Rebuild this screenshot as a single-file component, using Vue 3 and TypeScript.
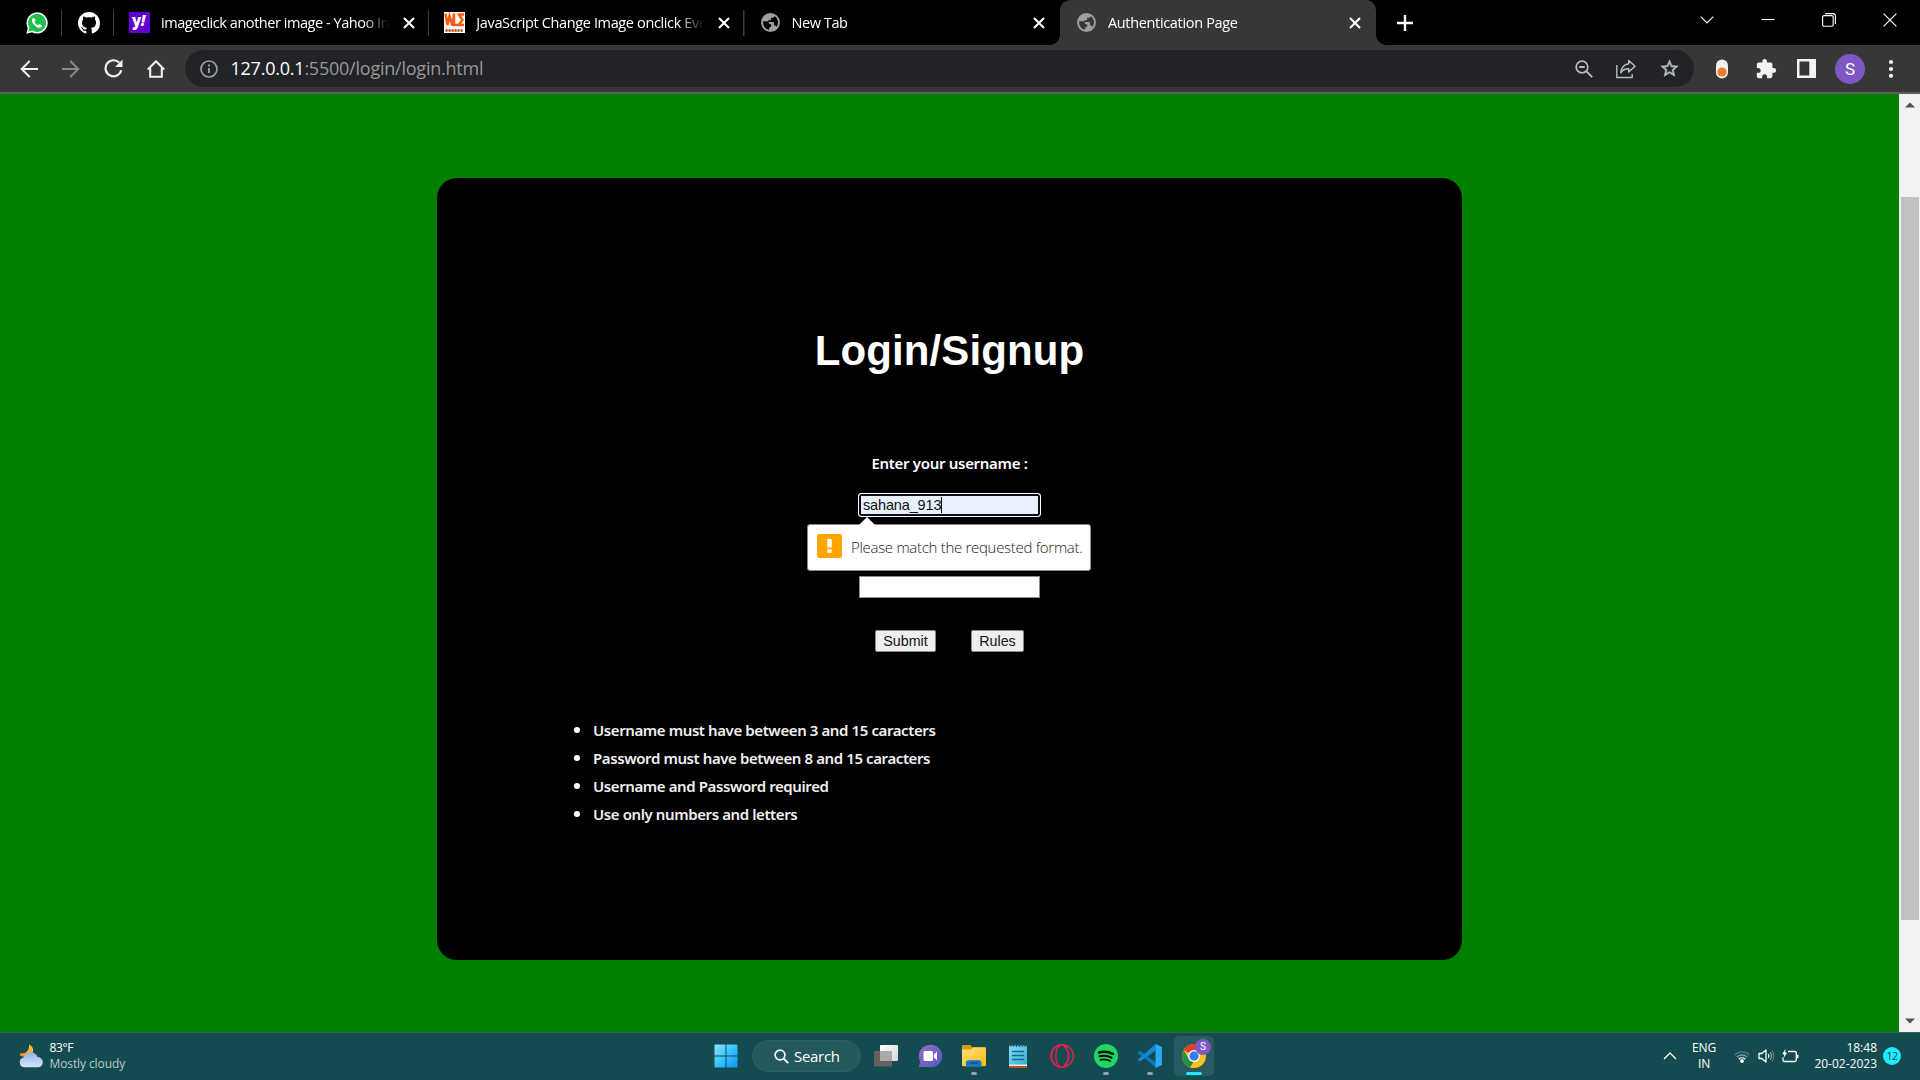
<script setup lang="ts">
import { ref } from 'vue'

interface Tab {
  title: string
  kind: 'yahoo' | 'wls' | 'globe'
  spacing: number
  active?: boolean
}

const tabs: Tab[] = [
  { title: 'imageclick another image - Yahoo Image Search', kind: 'yahoo', spacing: -0.45 },
  { title: 'JavaScript Change Image onclick Event', kind: 'wls', spacing: -0.37 },
  { title: 'New Tab', kind: 'globe', spacing: -0.45 },
  { title: 'Authentication Page', kind: 'globe', spacing: -0.33, active: true },
]

const rules: string[] = [
  'Username must have between 3 and 15 caracters',
  'Password must have between 8 and 15 caracters',
  'Username and Password required',
  'Use only numbers and letters',
]

const username = ref('sahana_913')
</script>

<template>
  <div class="screen">
    <header class="tabbar">
      <div class="pinned">
        <svg width="22" height="22" viewBox="0 0 22 22">
          <path d="M0.3 21.7 1.8 16A10.6 10.6 0 1 1 6 20.2Z" fill="#fff" />
          <path d="M2.3 19.7 3.4 15.6A9 9 0 1 1 6.4 18.6Z" fill="#1fbf4b" />
          <path d="M7.5 6c-.5 0-1.5.8-1.5 2.4 0 3 4.5 7.400 7.600 7.400 1.500 0 2.600-1 2.600-2.200 0-.5-2.600-1.800-3-1.600l-1.200 1.300c-1.500-.6-2.900-1.900-3.500-3.300l.9-1.200C9.500 8.200 8.500 6 8 6z" fill="#fff" />
        </svg>
      </div>
      <div class="pinned">
        <svg width="22" height="22" viewBox="0 0 16 16">
          <path fill="#fff" d="M8 0C3.580 0 0 3.580 0 8c0 3.540 2.290 6.530 5.470 7.590.4.070.55-.17.55-.38 0-.19-.01-.82-.01-1.490-2.010.37-2.530-.49-2.690-.94-.09-.23-.48-.94-.82-1.130-.28-.15-.68-.52-.01-.53.63-.01 1.080.58 1.230.82.72 1.210 1.870.87 2.330.66.070-.52.28-.87.51-1.070-1.780-.2-3.640-.89-3.640-3.950 0-.87.31-1.590.82-2.150-.08-.2-.36-1.020.08-2.120 0 0 .67-.21 2.200.82.64-.18 1.320-.27 2-.27s1.360.09 2 .27c1.530-1.040 2.200-.82 2.200-.82.44 1.100.16 1.920.08 2.120.51.56.82 1.270.82 2.150 0 3.070-1.870 3.750-3.650 3.950.29.25.54.73.54 1.480 0 1.070-.01 1.930-.01 2.200 0 .21.15.46.55.38A8.010 8.010 0 0 0 16 8c0-4.420-3.580-8-8-8z" />
        </svg>
      </div>
      <div v-for="(tab, i) in tabs" :key="i" class="tab" :class="{ active: tab.active }">
        <span v-if="tab.kind === 'yahoo'" class="fav yahoo">y<i>!</i></span>
        <svg v-else-if="tab.kind === 'wls'" class="fav" width="21" height="21" viewBox="0 0 21 21">
          <rect width="21" height="21" fill="#fff" />
          <path d="M1.500 1.500 3.500 13 5.500 4l3 9.500L10 1.500v11.500h4M20 2.500h-5l3.500 5.500-4 5H20" fill="none" stroke="#fb5a0b" stroke-width="2.500" />
          <path d="M1.500 18.500h18" stroke="#b8420e" stroke-width="2.600" stroke-dasharray="2.200 .8" />
        </svg>
        <svg v-else class="fav" width="21" height="21" viewBox="0 0 24 24">
          <path fill="#9aa0a6" d="M12 1.200a10.800 10.800 0 1 0 0 21.600 10.800 10.800 0 0 0 0-21.600zm-1.500 19.200A8.600 8.600 0 0 1 3.600 12c0-.5.1-1 .2-1.500h4.500c1 0 1.700.6 1.700 1.600v.6c0 .7.500 1.200 1.200 1.200h1.600v2.200c0 .8-.6 1.300-1.300 1.300h-1zM18.700 17c-.3-.9-1-1.500-2-1.500h-.6v-3c0-.6-.4-1-1-1H9.600V9.300h2.100c.6 0 1-.4 1-1V6.500h2c1.200 0 2-.9 2-2A8.600 8.600 0 0 1 18.700 17z" />
        </svg>
        <span class="tab-title" :style="{ letterSpacing: tab.spacing + 'px' }">{{ tab.title }}</span>
        <svg class="tab-close" width="12" height="12" viewBox="0 0 12 12">
          <path d="M1 1l10 10M11 1 1 11" stroke="#fff" stroke-width="2.100" />
        </svg>
      </div>
      <svg class="plus" width="16" height="16" viewBox="0 0 16 16">
        <path d="M8 0v16M0 8h16" stroke="#fff" stroke-width="2.400" />
      </svg>
      <div class="window-buttons">
        <svg width="14" height="14" viewBox="0 0 14 14"><path d="M.7 3.700 7 10l6.300-6.300" fill="none" stroke="#fff" stroke-width="1.100" /></svg>
        <svg width="14" height="14" viewBox="0 0 14 14"><path d="M.5 6.500h13" stroke="#fff" stroke-width="1.100" /></svg>
        <svg width="14" height="14" viewBox="0 0 14 14">
          <rect x=".6" y="2.600" width="10.600" height="10.600" rx="1.500" fill="none" stroke="#fff" stroke-width="1.100" />
          <path d="M3 .6h8c1.400 0 2.400 1 2.400 2.400v8" fill="none" stroke="#fff" stroke-width="1.100" />
        </svg>
        <svg width="14" height="14" viewBox="0 0 14 14"><path d="M.6.6l12.800 12.800M13.400.6.6 13.400" stroke="#fff" stroke-width="1.100" /></svg>
      </div>
    </header>

    <nav class="toolbar">
      <div class="nav-buttons">
        <svg width="18" height="18" viewBox="0 0 18 18"><path d="M18 9H2M9.700 1 1.700 9l8 8" fill="none" stroke="#f1f3f4" stroke-width="2" /></svg>
        <svg width="18" height="18" viewBox="0 0 18 18"><path d="M0 9h16M8.300 1l8 8-8 8" fill="none" stroke="#86888a" stroke-width="2" /></svg>
        <svg width="19" height="19" viewBox="0 0 19 19">
          <path d="M17.300 11.300A8 8 0 1 1 15.200 3.600" fill="none" stroke="#f1f3f4" stroke-width="2.100" />
          <path d="M18.500.6v7.400H11z" fill="#f1f3f4" />
        </svg>
        <svg width="18" height="18" viewBox="0 0 18 18"><path d="M.8 9.500 9 1.300l8.200 8.200M3.200 8v8.800h11.600V8" fill="none" stroke="#f1f3f4" stroke-width="2.100" /></svg>
      </div>
      <div class="omnibox">
        <svg class="info" width="18" height="18" viewBox="0 0 18 18">
          <circle cx="9" cy="9" r="8" fill="none" stroke="#9aa0a6" stroke-width="1.700" />
          <path d="M9 8v5M9 4.500v2" stroke="#9aa0a6" stroke-width="1.900" />
        </svg>
        <span class="url"><b>127.0.0.1</b>:5500/login/login.html</span>
        <div class="omni-icons">
          <svg width="18" height="18" viewBox="0 0 18 18">
            <circle cx="7" cy="7" r="5.800" fill="none" stroke="#b9bcbf" stroke-width="1.700" />
            <path d="M4.200 7h5.600M11.200 11.200l6 6" stroke="#b9bcbf" stroke-width="1.900" />
          </svg>
          <svg width="20" height="20" viewBox="0 0 20 20">
            <path d="M.8 6v12.500h15.400V15" fill="none" stroke="#b9bcbf" stroke-width="1.400" />
            <path d="M12.700 1.500 19 7.200l-6.300 5.700V9.800C9 9.800 6.500 11 4.800 13.800 5.300 9 7.500 5.500 12.700 4.800z" fill="none" stroke="#b9bcbf" stroke-width="1.500" stroke-linejoin="round" />
          </svg>
          <svg width="21" height="21" viewBox="0 0 24 24">
            <path fill="#b9bcbf" d="M22 9.240l-7.190-.62L12 2 9.190 8.630 2 9.240l5.460 4.730L5.820 21 12 17.270 18.180 21l-1.630-7.030L22 9.240zM12 15.400l-3.760 2.270 1-4.280-3.320-2.880 4.380-.38L12 6.100l1.710 4.040 4.380.38-3.320 2.880 1 4.280L12 15.400z" stroke="#b9bcbf" stroke-width=".6" />
          </svg>
        </div>
      </div>
      <div class="tool-icons">
        <svg width="14" height="20" viewBox="0 0 14 20"><rect x="1" y=".5" width="12" height="19" rx="6" fill="#eef0f1" /><circle cx="7" cy="13" r="4.600" fill="#f0792b" /></svg>
        <svg class="puzzle" width="22" height="22" viewBox="0 0 24 24"><path fill="#f1f3f4" d="M20.500 11H19V7c0-1.100-.9-2-2-2h-4V3.500a2.500 2.500 0 0 0-5 0V5H4c-1.100 0-1.990.9-1.990 2v3.800H3.500c1.490 0 2.700 1.210 2.700 2.700s-1.210 2.700-2.700 2.700H2V20c0 1.100.9 2 2 2h3.800v-1.500c0-1.490 1.210-2.700 2.700-2.700 1.490 0 2.700 1.210 2.700 2.700V22H17c1.100 0 2-.9 2-2v-4h1.500a2.500 2.500 0 0 0 0-5z" /></svg>
        <svg class="panel" width="19" height="19" viewBox="0 0 19 19"><path fill="#f1f3f4" fill-rule="evenodd" d="M0 0h19v19H0zM2.500 2.500v14h9.800v-14z" /></svg>
        <span class="avatar">S</span>
        <svg class="menu" width="6" height="20" viewBox="0 0 6 20"><g fill="#f1f3f4"><circle cx="3" cy="3" r="2.100" /><circle cx="3" cy="10" r="2.100" /><circle cx="3" cy="16.800" r="2.100" /></g></svg>
      </div>
    </nav>

    <main class="viewport">
      <section class="page">
        <div class="card">
          <h1>Login/Signup</h1>
          <label>Enter your username :</label>
          <div class="field focused">
            <span class="value">{{ username }}</span><span class="caret"></span>
            <div class="bubble">
              <svg class="arrow" width="16" height="8" viewBox="0 0 16 8"><path d="M0 8 8 0l8 8z" fill="#fff" /></svg>
              <span class="warn">
                <svg width="5" height="14" viewBox="0 0 5 14"><path d="M.3 0h4.400v8.500H.3zM.3 10.200h4.400v3.500H.3z" fill="#fff" /></svg>
              </span>
              <span class="message">Please match the requested format.</span>
            </div>
          </div>
          <div class="field plain"></div>
          <div class="buttons">
            <button class="submit">Submit</button>
            <button class="rules-btn">Rules</button>
          </div>
          <ul>
            <li v-for="rule in rules" :key="rule">{{ rule }}</li>
          </ul>
        </div>
      </section>
      <aside class="scrollbar">
        <svg width="10" height="6" viewBox="0 0 10 6"><path d="M0 5.500 5 .5l5 5z" fill="#505050" /></svg>
        <div class="thumb"></div>
        <svg width="10" height="6" viewBox="0 0 10 6"><path d="M0 .5h10l-5 5z" fill="#505050" /></svg>
      </aside>
    </main>

    <footer class="taskbar">
      <div class="weather">
        <svg width="24" height="24" viewBox="0 0 24 24">
          <defs>
            <linearGradient id="moon" x1="0" y1="1" x2="1" y2="0"><stop offset="0" stop-color="#f08a1c" /><stop offset="1" stop-color="#f9c846" /></linearGradient>
            <linearGradient id="cloud" x1="0" y1="0" x2="0" y2="1"><stop offset="0" stop-color="#8fb2ea" /><stop offset="1" stop-color="#d9e6fb" /></linearGradient>
          </defs>
          <path d="M10 .5c4 1.500 5.500 6 3 9.500-2 3-6 4-11 2C0 11 1 9 2.500 9.300 7.500 10 10.500 5 10 .5z" fill="url(#moon)" />
          <path d="M5 23.300a5 5 0 0 1-.5-9.800C6 9.800 9 8.500 12 8.500c3.500 0 5.800 2 6.500 4.600a5.100 5.100 0 0 1 .5 10.200z" fill="url(#cloud)" />
        </svg>
        <div class="weather-text"><span class="temp">83°F</span><span class="cond">Mostly cloudy</span></div>
      </div>

      <div class="apps">
        <div class="app">
          <svg width="24" height="24" viewBox="0 0 24 24">
            <defs><linearGradient id="win" x1="0" y1="0" x2="1" y2="1"><stop offset="0" stop-color="#8be2ff" /><stop offset=".5" stop-color="#35c3fb" /><stop offset="1" stop-color="#0a95f2" /></linearGradient></defs>
            <path fill="url(#win)" d="M.5 1.500q0-1 1-1h10v11H.500zM12.500.5h10q1 0 1 1v10h-11zM.5 12.500h11v11h-10q-1 0-1-1zM12.500 12.500h11v10q0 1-1 1h-10z" />
          </svg>
        </div>
        <div class="search">
          <svg width="15" height="15" viewBox="0 0 15 15"><circle cx="6" cy="6" r="4.900" fill="none" stroke="#fff" stroke-width="1.700" /><path d="M9.700 9.700l4.500 4.500" stroke="#fff" stroke-width="1.900" /></svg>
          <span>Search</span>
        </div>
        <div class="app">
          <svg width="24" height="24" viewBox="0 0 24 24">
            <defs><linearGradient id="tv" x1="0" y1="0" x2="1" y2="1"><stop offset="0" stop-color="#fff" /><stop offset="1" stop-color="#d5d5d5" /></linearGradient></defs>
            <rect x="0" y="7" width="18" height="15.500" rx="1" fill="#626262" />
            <rect x="6" y="1" width="18" height="16" rx="1" fill="url(#tv)" />
            <rect x="6" y="7" width="12" height="10" fill="#aaa" />
          </svg>
        </div>
        <div class="app">
          <svg width="24" height="24" viewBox="0 0 24 24">
            <defs><linearGradient id="chat" x1="0" y1="0" x2="1" y2="1"><stop offset="0" stop-color="#9a6bbf" /><stop offset="1" stop-color="#4f57cb" /></linearGradient></defs>
            <path d="M12 .8a11.300 11.300 0 1 1-2 22.200H.9l1.200-5.600A11.300 11.300 0 0 1 12 .8z" fill="url(#chat)" />
            <rect x="5.500" y="7" width="9.500" height="10" rx="1.500" fill="#fff" /><path d="M16 10.500 19 7.500v9l-3-3z" fill="#fff" />
          </svg>
        </div>
        <div class="app">
          <svg width="24" height="24" viewBox="0 0 24 24">
            <defs><linearGradient id="folder" x1="0" y1="0" x2="1" y2="1"><stop offset="0" stop-color="#ffe07a" /><stop offset="1" stop-color="#fdbb17" /></linearGradient></defs>
            <path d="M0 2q0-1 1-1h7.500l2 2.500H22V8H0z" fill="#dc9a0d" />
            <path d="M0 5.500h9l2-2.200h12q1 0 1 1v17q0 1-1 1H1q-1 0-1-1z" fill="url(#folder)" />
            <path d="M4 22.300v-3.500q0-2.500 2.500-2.500h10.500q2.500 0 2.500 2.500v3.500z" fill="#1477ce" /><path d="M7.500 19h8.500" stroke="#0a549c" stroke-width="1.500" />
          </svg>
          <i class="dot"></i>
        </div>
        <div class="app">
          <svg width="24" height="24" viewBox="0 0 24 24">
            <defs><linearGradient id="note" x1="0" y1="0" x2="1" y2="1"><stop offset="0" stop-color="#8be0f4" /><stop offset="1" stop-color="#32abd0" /></linearGradient></defs>
            <rect x="3" y="20" width="18" height="4" rx=".8" fill="#b5571c" /><rect x="3" y="18" width="18" height="4" fill="#e9eef1" />
            <rect x="3" y="1.500" width="18" height="19" rx="1" fill="url(#note)" />
            <path d="M5 0v3M7.800 0v3M10.600 0v3M13.400 0v3M16.200 0v3M19 0v3" stroke="#12506e" stroke-width="1" />
            <path d="M6 7.500h12M6 11.500h12M6 15.500h12" stroke="#106a91" stroke-width="1.500" />
          </svg>
        </div>
        <div class="app">
          <svg width="24" height="24" viewBox="0 0 24 24"><g fill="none" stroke="#dc234c" stroke-width="1.400"><circle cx="12" cy="12" r="11.200" /><ellipse cx="12" cy="12" rx="6.300" ry="11" /><path d="M14.500 3c6 4 6 14 0 18M9.300 1.300C-1 4.500-1 19.500 9.300 22.700" /></g></svg>
        </div>
        <div class="app">
          <svg width="24" height="24" viewBox="0 0 24 24"><circle cx="12" cy="12" r="12" fill="#1fd760" /><g fill="none" stroke="#061008" stroke-linecap="round"><path d="M5 8.500c4.500-1.200 10-.8 14 1.500" stroke-width="2.400" /><path d="M5.600 12.300c4-1 8.500-.6 11.900 1.400" stroke-width="2" /><path d="M6.300 15.800c3.500-.8 7-.4 9.900 1.300" stroke-width="1.700" /></g></svg>
          <i class="dot"></i>
        </div>
        <div class="app">
          <svg width="24" height="24" viewBox="0 0 24 24">
            <path d="M0 8.500 2 6.700l16.500 12V24L.3 9.600z" fill="#0a76bd" />
            <path d="M0 15.500 17.500 0v6.500L2 17.400.2 16.300z" fill="#1688d2" />
            <path d="M17.500 0 24 3v18l-6.500 3z" fill="#29a8f4" />
          </svg>
          <i class="dot"></i>
        </div>
        <div class="app current">
          <svg width="24" height="24" viewBox="0 0 24 24">
            <circle cx="12" cy="12" r="12" fill="#fcc31e" />
            <path d="M12 12 1.600 6A12 12 0 0 1 22.400 6L12 6z" fill="#e33b2e" />
            <path d="M1.600 6 7 15l5 3-3.500 5.500A12 12 0 0 1 1.600 6z" fill="#229342" /><path d="M17.200 15 12 24a12 12 0 0 1-3.800-.6L12 17z" fill="#fcc31e" />
            <circle cx="12" cy="12" r="6" fill="#fff" /><circle cx="12" cy="12" r="4.700" fill="#3a7cec" />
          </svg>
          <span class="profile">S</span>
          <i class="dot"></i>
        </div>
      </div>

      <div class="tray">
        <svg class="chev" width="14" height="8" viewBox="0 0 14 8"><path d="M1 7l6-6 6 6" fill="none" stroke="#fff" stroke-width="1.300" /></svg>
        <div class="lang"><span>ENG</span><span>IN</span></div>
        <svg class="wifi" width="16" height="13" viewBox="0 0 16 13">
          <g fill="none" stroke-width="1.300"><path d="M.8 5a10 10 0 0 1 14.400 0" stroke="#52797b" /><path d="M2.800 7.200a7.300 7.300 0 0 1 10.400 0" stroke="#7d9a9b" /><path d="M4.800 9.200a4.600 4.600 0 0 1 6.400 0" stroke="#fff" /></g><circle cx="8" cy="11" r="1.900" fill="#fff" />
        </svg>
        <svg class="sound" width="17" height="14" viewBox="0 0 17 14">
          <path d="M1 4.500h2.800L8 1v12L3.800 9.500H1z" fill="none" stroke="#fff" stroke-width="1.300" stroke-linejoin="round" />
          <g fill="none" stroke-width="1.200"><path d="M10.300 5q1.300 2 0 4" stroke="#fff" /><path d="M12.300 3.200q2.500 3.800 0 7.600" stroke="#8ba6a7" /><path d="M14.200 1.500q3.300 5.500 0 11" stroke="#557b7d" /></g>
        </svg>
        <svg class="battery" width="17" height="14" viewBox="0 0 17 14">
          <path d="M6 2.500h6.800q1.500 0 1.500 1.500v7q0 1.500-1.500 1.500H2.500Q1 12.500 1 11V8.500" fill="none" stroke="#fff" stroke-width="1.300" /><path d="M15.700 5.800v3.400" stroke="#fff" stroke-width="1.600" /><path d="M3.500 0 .2 5.200h2L1.700 9l3.500-5.400h-2z" fill="#fff" />
        </svg>
        <div class="clock"><span class="time">18:48</span><span class="date">20-02-2023</span></div>
        <span class="count">12</span>
      </div>
    </footer>
  </div>
</template>

<style>
body {
  margin: 0;
  overflow: hidden;
  background: #000;
}
</style>

<style scoped>
.screen {
  width: 1920px;
  height: 1080px;
  display: flex;
  flex-direction: column;
  overflow: hidden;
  font-family: "Open Sans", "Noto Sans", sans-serif;
  color: #fff;
}
svg { display: block; flex: none; }
.screen * { box-sizing: border-box; }

.tabbar {
  height: 45px;
  flex: none;
  display: flex;
  background: #000;
  padding-left: 10px;
}
.pinned {
  width: 52px;
  display: flex;
  align-items: center;
  justify-content: center;
  background: linear-gradient(#3c3c3c, #3c3c3c) right 0 top 10px / 1.500px 26px no-repeat;
}
.pinned:first-child { padding-left: 2px; }
.pinned:nth-child(2) { padding-left: 1px; }
.tab {
  width: 315.300px;
  display: flex;
  align-items: center;
  padding: 0 14.500px 0 15px;
  background: linear-gradient(#3c3c3c, #3c3c3c) right 0 top 10px / 1.500px 26px no-repeat;
}
.tab:nth-child(5) { background: none; }
.tab.active {
  position: relative;
  width: 316px;
  padding-left: 16px;
  padding-right: 15px;
  background: #373737;
  border-radius: 10px 10px 0 0;
}
.tab.active::before,
.tab.active::after {
  content: "";
  position: absolute;
  bottom: 0;
  width: 10px;
  height: 10px;
}
.tab.active::before { left: -10px; background: radial-gradient(circle at 0 0, transparent 9.500px, #373737 10px); }
.tab.active::after { right: -10px; background: radial-gradient(circle at 100% 0, transparent 9.500px, #373737 10px); }
.fav { flex: none; width: 21px; height: 21px; }
.yahoo {
  background: #6001d2;
  font: 800 15px/17px "Open Sans", sans-serif;
  letter-spacing: -0.5px;
  padding-left: 3px;
}
.tab-title {
  flex: 1;
  margin-left: 11px;
  margin-right: 14px;
  overflow: hidden;
  white-space: nowrap;
  font-size: 14.500px;
  line-height: 22px;
  -webkit-mask-image: linear-gradient(90deg, #000 calc(100% - 26px), transparent);
  mask-image: linear-gradient(90deg, #000 calc(100% - 26px), transparent);
}
.plus { margin: 14.500px 0 0 21.500px; }
.window-buttons {
  margin-left: auto;
  display: flex;
  gap: 47px;
  padding: 13px 23px 0 0;
}

.toolbar {
  height: 49px;
  flex: none;
  display: flex;
  align-items: center;
  background: #373737;
  border-bottom: 2px solid #5e5e5e;
}
.nav-buttons { display: flex; gap: 24px; padding-left: 20px; width: 185px; align-items: center; }
.omnibox {
  width: 1509px;
  height: 37px;
  border-radius: 19px;
  background: #222327;
  display: flex;
  align-items: center;
  padding: 0 14px 0 15px;
}
.url {
  margin: -1px 0 0 12.500px;
  font-size: 18px;
  line-height: 26px;
  letter-spacing: -0.23px;
  color: #96999c;
  white-space: nowrap;
}
.url b { color: #fff; font-weight: 400; }
.omni-icons { margin-left: auto; display: flex; align-items: center; gap: 23px; }
.tool-icons { flex: 1; display: flex; align-items: center; padding-left: 21px; }
.puzzle { margin-left: 26px; }
.panel { margin-left: 20px; }
.avatar {
  width: 30px;
  height: 30px;
  margin-left: 19px;
  border-radius: 50%;
  background: #7e57c2;
  font: 17px/31px Roboto, sans-serif;
  text-align: center;
}
.menu { margin-left: 23px; }

.viewport { height: 938px; flex: none; display: flex; }
.page { width: 1899px; background: #008000; padding: 84px 0 0 437px; }
.card {
  width: 1025px;
  height: 782px;
  background: #000;
  border-radius: 20px;
  display: flex;
  flex-direction: column;
  align-items: center;
  padding-top: 149px;
}
h1 {
  margin: 0;
  font: bold 42px/48px "Liberation Sans", Arial, sans-serif;
  letter-spacing: 0.12px;
}
label {
  margin-top: 76px;
  font: 600 15px/24px "Noto Sans", sans-serif;
  letter-spacing: -0.3px;
}
.field {
  font: 14.500px/18px "Liberation Sans", Arial, sans-serif;
  color: #111;
}
.focused {
  position: relative;
  width: 183px;
  height: 24px;
  margin-top: 18px;
  border: 1px solid #fff;
  border-radius: 3px;
  background: #e8f0fe;
  box-shadow: inset 0 0 0 2px #0c0f18;
  display: flex;
  align-items: center;
  padding-left: 4px;
}
.value { letter-spacing: -0.15px; }
.caret { width: 1px; height: 16px; background: #000; }
.bubble {
  position: absolute;
  left: -52px;
  top: 30px;
  width: 284px;
  height: 47px;
  border: 1px solid #8a8a8a;
  border-radius: 3px;
  background: #fff;
  display: flex;
  padding: 9px 0 0 8.500px;
}
.arrow { position: absolute; left: 51px; top: -8px; }
.warn {
  width: 25px;
  height: 24px;
  background: #ffa400;
  border-radius: 2px;
  display: flex;
  justify-content: center;
  align-items: center;
}
.message {
  margin-left: 9.500px;
  font: 350 15px/26px "Open Sans", sans-serif;
  letter-spacing: -0.3px;
  color: #222;
  white-space: nowrap;
}
.plain {
  width: 181px;
  height: 22px;
  margin-top: 59px;
  background: #fff;
  border: 1px solid #8b8b8b;
}
.buttons { display: flex; margin-top: 32px; gap: 35px; }
button {
  height: 22px;
  padding: 0;
  border: 1px solid #8b8b8b;
  border-radius: 2px;
  background: #efefef;
  color: #111;
  font: 14.300px/19px "Liberation Sans", Arial, sans-serif;
}
.submit { width: 61px; }
.rules-btn { width: 53px; }
ul {
  width: 100%;
  margin: 64px 0 0;
  padding: 0 0 0 156px;
  font: 600 15px/28px "Noto Sans", sans-serif;
  letter-spacing: -0.4px;
  color: #f0f0f0;
  list-style: none;
}
li { display: flex; align-items: center; }
li::before {
  content: "";
  width: 6px;
  height: 6px;
  border-radius: 50%;
  background: #fff;
  margin: 0 13px 0 -19px;
}

.scrollbar {
  width: 21px;
  background: #f1f1f1;
  display: flex;
  flex-direction: column;
  align-items: center;
  padding: 8px 0 8px 1px;
}
.thumb { width: 18px; height: 723px; margin: 89px 0 auto; background: #c1c1c1; }

.taskbar {
  height: 48px;
  flex: none;
  display: flex;
  align-items: center;
  background: #134b51;
  border-top: 1px solid #3b5d61;
  padding-bottom: 1px;
}
.weather { width: 704px; display: flex; padding-left: 18.500px; align-items: center; }
.weather-text { display: flex; flex-direction: column; margin-left: 7px; font-size: 12px; line-height: 16px; }
.temp { letter-spacing: -0.4px; font-weight: 500; }
.cond { color: #b9cacb; letter-spacing: -0.1px; }
.apps { display: flex; align-items: center; }
.app {
  position: relative;
  width: 44px;
  height: 40px;
  display: flex;
  align-items: center;
  justify-content: center;
}
.dot {
  position: absolute;
  left: 19px;
  bottom: 1px;
  width: 6px;
  height: 3px;
  border-radius: 2px;
  background: #8fa5a7;
}
.current { width: 40px; margin-left: 2px; border-radius: 5px; background: #285a5f; }
.current .dot { left: 12px; width: 16px; background: #20e8ff; }
.profile {
  position: absolute;
  left: 21px;
  top: 3px;
  width: 16px;
  height: 16px;
  border-radius: 50%;
  background: #7e57c2;
  font: 10px/16px Roboto, sans-serif;
  text-align: center;
}
.search {
  width: 109px;
  height: 32px;
  margin: 0 3px 0 4px;
  border-radius: 16px;
  background: #23585d;
  border: 1px solid #2c6065;
  display: flex;
  align-items: center;
  padding-left: 21px;
  font-size: 15px;
  letter-spacing: -0.3px;
  font-weight: 500;
}
.search span { margin-left: 5px; }
.tray { margin-left: auto; display: flex; align-items: center; padding-right: 19px; }
.lang, .clock { display: flex; flex-direction: column; font-size: 12px; line-height: 16px; }
.lang { align-items: center; width: 24px; margin-left: 15px; letter-spacing: -0.1px; }
.wifi { margin-left: 18px; }
.sound { margin-left: 8px; }
.battery { margin-left: 7px; }
.clock { width: 78px; align-items: flex-end; letter-spacing: 0; }
.count {
  width: 18px;
  height: 18px;
  margin-left: 6px;
  border-radius: 50%;
  background: #20eaff;
  color: #0b3940;
  font-size: 10.500px;
  line-height: 18px;
  text-align: center;
  letter-spacing: -0.4px;
}
</style>
